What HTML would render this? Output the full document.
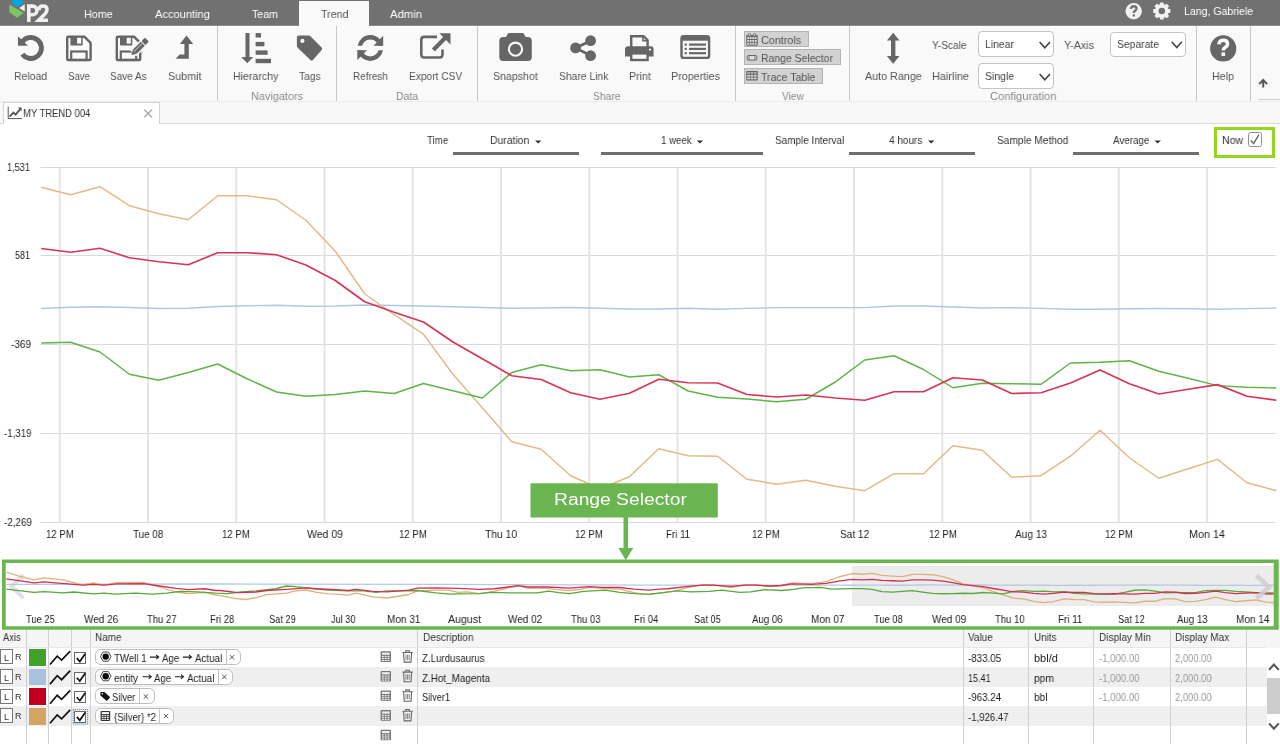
<!DOCTYPE html>
<html lang="en"><head><meta charset="utf-8"><title>P2 Explorer - Trend</title><style>
html,body{margin:0;padding:0;}
body{width:1280px;height:744px;overflow:hidden;position:relative;background:#fff;font-family:"Liberation Sans", sans-serif;}
.t{will-change:transform;}
div,span,svg{position:absolute;box-sizing:border-box;}
.t{white-space:nowrap;display:block;transform-origin:0 0;}
svg{overflow:visible;}
.g{left:0;top:0;width:1280px;height:0;}
.sep{width:1px;background:#c8c8c8;top:26px;height:75px;}
.vbtn{background:#d2d2d2;border:1px solid #b4b4b4;}
.sel{background:#fff;border:1px solid #c4c4c4;border-radius:4px;}
.ul{height:3px;background:#6e6e6e;top:152px;}
.cs{width:1px;background:#d0d0d0;top:630px;height:114px;}
.chip{background:#fff;border:1px solid #bdbdbd;border-radius:5.5px;height:16px;}
.chipsep{width:1px;background:#c6c6c6;height:14px;}
.lbox{background:#fff;border:1px solid #777;width:12.6px;height:15px;left:0px;}

.cb{background:#fff;border:1px solid #6a6a6a;width:12px;height:12px;left:74.4px;}
</style></head><body><div class="g"><div style="left:0px;top:0px;width:1280px;height:25px;background:#717171;"></div><div style="left:0px;top:25px;width:1280px;height:1px;background:#8c8c8c;"></div><div style="left:0px;top:26px;width:1280px;height:1px;background:#fdfdfd;"></div><div style="left:299px;top:1px;width:70px;height:26px;background:#f9f9f9;"></div><svg width="64" height="26" viewBox="0 0 64 26" style="left:0;top:0"><path d="M10.75,2.25L14.5,0H20.5L24.25,2.25L17.25,7.25Z" fill="#00a7e1"/><path d="M9.25,4.5L23.75,12.75L17.25,17.75L9.5,12.5Z" fill="#7cc465"/><path d="M24.75,4.25L19.25,8L24.75,11.5Z" fill="#f0f0f0"/><path d="M28.8,22V6.1H32.6a4.3,4.3 0 0 1 0,8.6H28.8" fill="none" stroke="#f0f0f0" stroke-width="3.6"/><path d="M38.9,10.2Q38.9,6 43,6Q47,6 47,9.6Q47,12.4 43.4,15.6L38.6,20.2H48" fill="none" stroke="#f0f0f0" stroke-width="3.5"/></svg><span class="t" style="left:83.50px;top:9.27px;font-size:11.5px;line-height:11.5px;color:#fff;transform:scaleX(0.9369);">Home</span><span class="t" style="left:154.50px;top:9.27px;font-size:11.5px;line-height:11.5px;color:#fff;transform:scaleX(0.9647);">Accounting</span><span class="t" style="left:252.25px;top:9.27px;font-size:11.5px;line-height:11.5px;color:#fff;transform:scaleX(0.9191);">Team</span><span class="t" style="left:320.60px;top:9.27px;font-size:11.5px;line-height:11.5px;color:#555;transform:scaleX(0.9283);">Trend</span><span class="t" style="left:390.25px;top:9.27px;font-size:11.5px;line-height:11.5px;color:#fff;transform:scaleX(0.9813);">Admin</span><span class="t" style="left:1184.00px;top:6.27px;font-size:11.5px;line-height:11.5px;color:#fff;transform:scaleX(0.9171);">Lang, Gabriele</span><svg width="1280" height="26" viewBox="0 0 1280 26" style="left:0;top:0"><circle cx="1133.7" cy="11.3" r="8.2" fill="#f2f2f2"/><path d="M1130.9,8.9Q1131.1,6.2 1133.8,6.2Q1136.5,6.2 1136.5,8.6Q1136.5,9.9 1135.1,10.8Q1133.8,11.6 1133.8,13" fill="none" stroke="#717171" stroke-width="2.4"/><rect x="1132.7" y="14.3" width="2.2" height="2.2" fill="#717171"/><rect x="1159.8999999999999" y="2.4000000000000004" width="3.8" height="4.2" rx="0.6" fill="#f2f2f2" transform="rotate(0 1161.8 11)"/><rect x="1159.8999999999999" y="2.4000000000000004" width="3.8" height="4.2" rx="0.6" fill="#f2f2f2" transform="rotate(45 1161.8 11)"/><rect x="1159.8999999999999" y="2.4000000000000004" width="3.8" height="4.2" rx="0.6" fill="#f2f2f2" transform="rotate(90 1161.8 11)"/><rect x="1159.8999999999999" y="2.4000000000000004" width="3.8" height="4.2" rx="0.6" fill="#f2f2f2" transform="rotate(135 1161.8 11)"/><rect x="1159.8999999999999" y="2.4000000000000004" width="3.8" height="4.2" rx="0.6" fill="#f2f2f2" transform="rotate(180 1161.8 11)"/><rect x="1159.8999999999999" y="2.4000000000000004" width="3.8" height="4.2" rx="0.6" fill="#f2f2f2" transform="rotate(225 1161.8 11)"/><rect x="1159.8999999999999" y="2.4000000000000004" width="3.8" height="4.2" rx="0.6" fill="#f2f2f2" transform="rotate(270 1161.8 11)"/><rect x="1159.8999999999999" y="2.4000000000000004" width="3.8" height="4.2" rx="0.6" fill="#f2f2f2" transform="rotate(315 1161.8 11)"/><circle cx="1161.8" cy="11" r="5.1" fill="none" stroke="#f2f2f2" stroke-width="3.6"/></svg></div><div class="g"><div style="left:0px;top:27px;width:1280px;height:74.2px;background:#f9f9f9;"></div><div style="left:299px;top:25px;width:70px;height:3px;background:#f9f9f9;"></div><div style="left:0px;top:101px;width:1280px;height:1px;background:#ececec;"></div><div class="sep" style="left:217px"></div><div class="sep" style="left:336px"></div><div class="sep" style="left:477px"></div><div class="sep" style="left:735px"></div><div class="sep" style="left:849px"></div><div class="sep" style="left:1196px"></div><div class="sep" style="left:1250px"></div><div style="left:1258px;top:99px;width:22px;height:1px;background:#d0d0d0;"></div><div class="vbtn" style="left:744px;top:31.3px;width:64.8px;height:15.4px;"></div><div class="vbtn" style="left:744px;top:49.3px;width:97px;height:15.6px;"></div><div class="vbtn" style="left:744px;top:68px;width:78.8px;height:15.8px;"></div><div class="sel" style="left:978px;top:31.3px;width:75.5px;height:25.8px;"></div><div class="sel" style="left:978px;top:63.3px;width:75.5px;height:25.6px;"></div><div class="sel" style="left:1110.3px;top:31.5px;width:75.4px;height:25.2px;"></div><svg width="1280" height="124" viewBox="0 0 1280 124" style="left:0;top:0"><path d="M21.81,42.76A10.52,10.52 0 1 1 22.41,54.20" fill="none" stroke="#666" stroke-width="4.84"/><path d="M17.98,36.3V45.72H27.9Z" fill="#666"/><g transform="translate(66,35.6)"><path d="M1.2,2.2Q1.2,1.2 2.2,1.2H18.6L24.6,7.2V23.4Q24.6,24.4 23.6,24.4H2.2Q1.2,24.4 1.2,23.4Z" fill="none" stroke="#666" stroke-width="2.4" stroke-linejoin="round"/><path d="M4.4,1.2H16.7V9Q16.7,10 15.7,10H5.4Q4.4,10 4.4,9Z" fill="#666"/><rect x="11.1" y="2.2" width="4.1" height="5.8" fill="#f9f9f9"/><rect x="5.2" y="15.9" width="15.4" height="8.5" fill="none" stroke="#666" stroke-width="2.2"/></g><g transform="translate(115.6,35.6)"><path d="M1.2,2.2Q1.2,1.2 2.2,1.2H18.6L24.6,7.2V23.4Q24.6,24.4 23.6,24.4H2.2Q1.2,24.4 1.2,23.4Z" fill="none" stroke="#666" stroke-width="2.4" stroke-linejoin="round"/><path d="M4.4,1.2H16.7V9Q16.7,10 15.7,10H5.4Q4.4,10 4.4,9Z" fill="#666"/><rect x="11.1" y="2.2" width="4.1" height="5.8" fill="#f9f9f9"/><rect x="5.2" y="15.9" width="15.4" height="8.5" fill="none" stroke="#666" stroke-width="2.2"/></g><g transform="translate(139.25,47.3) rotate(-45)"><rect x="-8.6" y="-4.3" width="20.4" height="8.6" fill="#f9f9f9"/><rect x="-6.4" y="-2.8" width="11.4" height="5.6" fill="#666"/><rect x="5.9" y="-2.8" width="4.9" height="5.6" rx="0.9" fill="#666"/><path d="M-6.4,-2.8L-11,0L-6.4,2.8Z" fill="#666"/><path d="M-6.4,-0.7H5" stroke="#f9f9f9" stroke-width="0.7"/></g><path d="M186.5,35.6L193.2,43.9H188.8V58.8H175.6L179.6,54.4H184.4V43.9H179.9Z" fill="#666"/><path d="M245.5,33.1H249.5V56.9H253.2L247.3,63.2L241.2,56.9H245.5Z" fill="#666"/><rect x="255.6" y="33.1" width="5.4" height="4.4" fill="#666"/><rect x="255.6" y="41.9" width="8.8" height="4.4" fill="#666"/><rect x="255.6" y="50.4" width="12.0" height="4.4" fill="#666"/><rect x="255.6" y="58.8" width="15.4" height="4.4" fill="#666"/><path d="M298.9,35.5H308.6Q309.8,35.5 310.7,36.4L321.6,47.4Q322.9,48.7 321.6,50L312.9,59.9Q311.7,61.2 310.4,59.9L297.9,47.9Q296.9,46.9 296.9,45.7V37.5Q296.9,35.5 298.9,35.5Z" fill="#666"/><circle cx="302.4" cy="40.9" r="2.1" fill="#f9f9f9"/><clipPath id="rfu"><rect x="350" y="30" width="40" height="15.7"/></clipPath><clipPath id="rfl"><rect x="350" y="50.3" width="40" height="15"/></clipPath><circle cx="370.3" cy="48.0" r="10.7" fill="none" stroke="#666" stroke-width="4.4" clip-path="url(#rfu)"/><path d="M383.2,35.8V45.7H373.5Z" fill="#666"/><circle cx="370.3" cy="48.0" r="10.7" fill="none" stroke="#666" stroke-width="4.4" clip-path="url(#rfl)"/><path d="M357.3,60V50.3H367Z" fill="#666"/><path d="M437,36.9H424.2Q421.3,36.9 421.3,39.8V54.6Q421.3,57.5 424.2,57.5H439.6Q442.5,57.5 442.5,54.6V49.6" fill="none" stroke="#666" stroke-width="2.6"/><path d="M433.3,49.9L445.6,37.6" stroke="#666" stroke-width="4.2"/><path d="M439.4,33.3H450.5V44.4Z" fill="#666"/><rect x="499.3" y="37" width="32.5" height="24" rx="4" fill="#666"/><path d="M505.4,38.5L507.3,34.4Q507.9,33.1 509.4,33.1H522.2Q523.7,33.1 524.3,34.4L526.2,38.5Z" fill="#666"/><circle cx="515.5" cy="49.2" r="6.6" fill="none" stroke="#f9f9f9" stroke-width="2.1"/><path d="M590.6,40.9L575.4,47.9L590.6,55.6" fill="none" stroke="#666" stroke-width="2.8"/><circle cx="575.6" cy="47.9" r="5.4" fill="#666"/><circle cx="590.6" cy="40.7" r="5.4" fill="#666"/><circle cx="590.6" cy="55.7" r="5.4" fill="#666"/><path d="M631.2,47V36.2H643.6L647.6,40.2V47" fill="none" stroke="#666" stroke-width="2.4"/><path d="M643,36V40.8H648" fill="none" stroke="#666" stroke-width="1.6"/><path d="M628,46.2H650.6Q653.6,46.2 653.6,49.2V56.4H625V49.2Q625,46.2 628,46.2Z" fill="#666"/><rect x="631.2" y="53.4" width="16.4" height="6.6" fill="#f9f9f9" stroke="#666" stroke-width="2.4"/><circle cx="650" cy="49.6" r="1.1" fill="#f9f9f9"/><rect x="681.5" y="36.3" width="27.6" height="21.6" rx="2.2" fill="none" stroke="#666" stroke-width="2.4"/><rect x="681.5" y="36.3" width="27.6" height="4.4" fill="#666"/><rect x="684.6" y="43.5" width="2.2" height="2.2" fill="#666"/><rect x="689" y="43.5" width="17" height="2.2" fill="#666"/><rect x="684.6" y="47.8" width="2.2" height="2.2" fill="#666"/><rect x="689" y="47.8" width="17" height="2.2" fill="#666"/><rect x="684.6" y="52.1" width="2.2" height="2.2" fill="#666"/><rect x="689" y="52.1" width="17" height="2.2" fill="#666"/><path d="M893.2,32.8L899.5,40.6H895.4V56H899.5L893.2,63.8L886.9,56H891V40.6H886.9Z" fill="#666"/><circle cx="1223.2" cy="48.4" r="13.1" fill="#666"/><path d="M1218.9,44.4Q1219.2,40.3 1223.3,40.3Q1227.5,40.3 1227.5,43.9Q1227.5,45.9 1225.3,47.2Q1223.3,48.4 1223.3,50.4" fill="none" stroke="#f9f9f9" stroke-width="3.5"/><rect x="1221.5" y="52.4" width="3.6" height="3.6" fill="#f9f9f9"/><path d="M1263.2,78.8L1267.6,83.4L1266.5,84.5L1264,82V87.2H1262.4V82L1259.9,84.5L1258.8,83.4Z" fill="#555" stroke="#555" stroke-width="0.5"/><g transform="translate(746.3,33.2)"><rect x="0" y="1.7" width="11.4" height="10.8" rx="0.6" fill="#666"/><rect x="0.95" y="3.90" width="1.9" height="1.9" fill="#dcdcdc"/><rect x="3.45" y="3.90" width="1.9" height="1.9" fill="#dcdcdc"/><rect x="5.95" y="3.90" width="1.9" height="1.9" fill="#dcdcdc"/><rect x="8.45" y="3.90" width="1.9" height="1.9" fill="#dcdcdc"/><rect x="0.95" y="6.75" width="1.9" height="1.9" fill="#dcdcdc"/><rect x="3.45" y="6.75" width="1.9" height="1.9" fill="#dcdcdc"/><rect x="5.95" y="6.75" width="1.9" height="1.9" fill="#dcdcdc"/><rect x="8.45" y="6.75" width="1.9" height="1.9" fill="#dcdcdc"/><rect x="0.95" y="9.60" width="1.9" height="1.9" fill="#dcdcdc"/><rect x="3.45" y="9.60" width="1.9" height="1.9" fill="#dcdcdc"/><rect x="5.95" y="9.60" width="1.9" height="1.9" fill="#dcdcdc"/><rect x="8.45" y="9.60" width="1.9" height="1.9" fill="#dcdcdc"/><rect x="2.1" y="0.4" width="2.2" height="2.8" rx="1" fill="#d2d2d2" stroke="#666" stroke-width="0.9"/><rect x="7.1" y="0.4" width="2.2" height="2.8" rx="1" fill="#d2d2d2" stroke="#666" stroke-width="0.9"/></g><g transform="translate(746.7,55)"><rect x="0.5" y="0.5" width="9.6" height="4.6" rx="1.2" fill="#ddd" stroke="#666" stroke-width="1"/><path d="M2.4,0.5V5.1M8.2,0.5V5.1" stroke="#666" stroke-width="0.8"/></g><g transform="translate(746.3,71)"><rect x="0" y="0" width="11.4" height="9.6" rx="0.6" fill="#666"/><rect x="0.95" y="1.20" width="2.7" height="1.5" fill="#bdbdbd"/><rect x="4.25" y="1.20" width="2.7" height="1.5" fill="#bdbdbd"/><rect x="7.55" y="1.20" width="2.7" height="1.5" fill="#bdbdbd"/><rect x="0.95" y="3.90" width="2.7" height="1.7" fill="#dcdcdc"/><rect x="4.25" y="3.90" width="2.7" height="1.7" fill="#dcdcdc"/><rect x="7.55" y="3.90" width="2.7" height="1.7" fill="#dcdcdc"/><rect x="0.95" y="6.60" width="2.7" height="1.7" fill="#dcdcdc"/><rect x="4.25" y="6.60" width="2.7" height="1.7" fill="#dcdcdc"/><rect x="7.55" y="6.60" width="2.7" height="1.7" fill="#dcdcdc"/></g><path d="M1039.6,42L1044.8,47.8L1050.0,42" fill="none" stroke="#444" stroke-width="1.6"/><path d="M1039.6,74L1044.8,79.8L1050.0,74" fill="none" stroke="#444" stroke-width="1.6"/><path d="M1171.8,41.8L1176.8,47.599999999999994L1181.8,41.8" fill="none" stroke="#444" stroke-width="1.6"/></svg><span class="t" style="left:14.40px;top:70.67px;font-size:11.5px;line-height:11.5px;color:#555;transform:scaleX(0.9080);">Reload</span><span class="t" style="left:67.90px;top:70.67px;font-size:11.5px;line-height:11.5px;color:#555;transform:scaleX(0.8334);">Save</span><span class="t" style="left:110.25px;top:70.67px;font-size:11.5px;line-height:11.5px;color:#555;transform:scaleX(0.8684);">Save As</span><span class="t" style="left:167.75px;top:70.67px;font-size:11.5px;line-height:11.5px;color:#555;transform:scaleX(0.9358);">Submit</span><span class="t" style="left:233.10px;top:70.67px;font-size:11.5px;line-height:11.5px;color:#555;transform:scaleX(0.9224);">Hierarchy</span><span class="t" style="left:299.40px;top:70.67px;font-size:11.5px;line-height:11.5px;color:#555;transform:scaleX(0.8890);">Tags</span><span class="t" style="left:352.90px;top:70.67px;font-size:11.5px;line-height:11.5px;color:#555;transform:scaleX(0.8652);">Refresh</span><span class="t" style="left:408.75px;top:70.67px;font-size:11.5px;line-height:11.5px;color:#555;transform:scaleX(0.8847);">Export CSV</span><span class="t" style="left:493.10px;top:70.67px;font-size:11.5px;line-height:11.5px;color:#555;transform:scaleX(0.9216);">Snapshot</span><span class="t" style="left:558.75px;top:70.67px;font-size:11.5px;line-height:11.5px;color:#555;transform:scaleX(0.8975);">Share Link</span><span class="t" style="left:628.75px;top:70.67px;font-size:11.5px;line-height:11.5px;color:#555;transform:scaleX(0.9236);">Print</span><span class="t" style="left:670.90px;top:70.67px;font-size:11.5px;line-height:11.5px;color:#555;transform:scaleX(0.9328);">Properties</span><span class="t" style="left:864.80px;top:70.67px;font-size:11.5px;line-height:11.5px;color:#555;transform:scaleX(0.9350);">Auto Range</span><span class="t" style="left:1212.00px;top:70.67px;font-size:11.5px;line-height:11.5px;color:#555;transform:scaleX(0.9300);">Help</span><span class="t" style="left:251.00px;top:90.77px;font-size:11.5px;line-height:11.5px;color:#8a8a8a;transform:scaleX(0.9460);">Navigators</span><span class="t" style="left:396.00px;top:90.77px;font-size:11.5px;line-height:11.5px;color:#8a8a8a;transform:scaleX(0.9055);">Data</span><span class="t" style="left:592.50px;top:90.77px;font-size:11.5px;line-height:11.5px;color:#8a8a8a;transform:scaleX(0.8961);">Share</span><span class="t" style="left:781.60px;top:90.77px;font-size:11.5px;line-height:11.5px;color:#8a8a8a;transform:scaleX(0.8819);">View</span><span class="t" style="left:989.50px;top:90.77px;font-size:11.5px;line-height:11.5px;color:#8a8a8a;transform:scaleX(0.9721);">Configuration</span><span class="t" style="left:760.70px;top:34.97px;font-size:11.5px;line-height:11.5px;color:#555;transform:scaleX(0.9386);">Controls</span><span class="t" style="left:761.00px;top:52.87px;font-size:11.5px;line-height:11.5px;color:#555;transform:scaleX(0.9069);">Range Selector</span><span class="t" style="left:761.00px;top:71.67px;font-size:11.5px;line-height:11.5px;color:#555;transform:scaleX(0.9150);">Trace Table</span><span class="t" style="left:932.30px;top:40.07px;font-size:11.5px;line-height:11.5px;color:#555;transform:scaleX(0.8822);">Y-Scale</span><span class="t" style="left:932.00px;top:71.37px;font-size:11.5px;line-height:11.5px;color:#555;transform:scaleX(0.9487);">Hairline</span><span class="t" style="left:984.80px;top:39.27px;font-size:11.5px;line-height:11.5px;color:#444;transform:scaleX(0.9056);">Linear</span><span class="t" style="left:984.80px;top:71.37px;font-size:11.5px;line-height:11.5px;color:#444;transform:scaleX(0.9134);">Single</span><span class="t" style="left:1063.80px;top:39.57px;font-size:11.5px;line-height:11.5px;color:#555;transform:scaleX(0.9325);">Y-Axis</span><span class="t" style="left:1116.90px;top:38.97px;font-size:11.5px;line-height:11.5px;color:#444;transform:scaleX(0.9017);">Separate</span></div><div class="g"><div style="left:0px;top:102px;width:1280px;height:21.5px;background:#f8f8f8;"></div><div style="left:0px;top:123px;width:1280px;height:1px;background:#dcdcdc;"></div><div style="left:2.5px;top:102px;width:157px;height:22px;background:#fff;border:1px solid #d4d4d4;border-bottom:none;"></div><svg width="170" height="22" viewBox="0 102 170 22" style="left:0;top:102px"><path d="M8.2,106.6V118.6H22" fill="none" stroke="#555" stroke-width="1"/><path d="M9.6,116.6L13.4,112.6L15.6,114.6L20.6,108.6" fill="none" stroke="#555" stroke-width="1.8"/><path d="M18,107.6H21.6V111.2Z" fill="#555"/><path d="M144.3,109.7L152,117.2M152,109.7L144.3,117.2" stroke="#a4a4a4" stroke-width="1.2"/></svg><span class="t" style="left:22.60px;top:107.69px;font-size:11px;line-height:11px;color:#333;transform:scaleX(0.8589);">MY TREND 004</span></div><div class="g"><span class="t" style="left:426.75px;top:135.39px;font-size:11px;line-height:11px;color:#333;transform:scaleX(0.8837);">Time</span><span class="t" style="left:490.00px;top:135.39px;font-size:11px;line-height:11px;color:#333;transform:scaleX(0.9440);">Duration</span><span class="t" style="left:661.25px;top:135.39px;font-size:11px;line-height:11px;color:#333;transform:scaleX(0.8821);">1 week</span><span class="t" style="left:774.50px;top:135.39px;font-size:11px;line-height:11px;color:#333;transform:scaleX(0.9060);">Sample Interval</span><span class="t" style="left:888.75px;top:135.39px;font-size:11px;line-height:11px;color:#333;transform:scaleX(0.9059);">4 hours</span><span class="t" style="left:997.00px;top:135.39px;font-size:11px;line-height:11px;color:#333;transform:scaleX(0.9248);">Sample Method</span><span class="t" style="left:1112.50px;top:135.39px;font-size:11px;line-height:11px;color:#333;transform:scaleX(0.8889);">Average</span><div class="ul" style="left:452.5px;width:126.3px"></div><div class="ul" style="left:601.25px;width:161.8px"></div><div class="ul" style="left:848.75px;width:126.3px"></div><div class="ul" style="left:1073.25px;width:126px"></div><div style="left:1214px;top:127px;width:61.2px;height:31px;border:3px solid #93d51f;background:#fff;"></div><div style="left:1247.6px;top:132.3px;width:14.5px;height:14.5px;border:1.7px solid #909090;border-radius:2.5px;background:#fff;"></div><span class="t" style="left:1221.80px;top:135.39px;font-size:11px;line-height:11px;color:#333;transform:scaleX(0.9630);">Now</span><svg width="1280" height="40" viewBox="0 124 1280 40" style="left:0;top:124px"><path d="M535,140.6H541.4L538.2,143.6Z" fill="#333"/><path d="M696.75,140.6H703.15L699.95,143.6Z" fill="#333"/><path d="M928,140.6H934.4L931.2,143.6Z" fill="#333"/><path d="M1154.5,140.6H1160.9L1157.7,143.6Z" fill="#333"/><path d="M1250.8,140.6L1253.6,143.6L1258.9,134.6" fill="none" stroke="#666" stroke-width="1.4"/></svg></div><div class="g"><svg width="1280" height="396" viewBox="0 163 1280 396" style="left:0;top:163px"><path d="M40.5,167.5H1275.5" stroke="#d9d9d9" stroke-width="1.15"/><path d="M40.5,255.5H1275.5" stroke="#d9d9d9" stroke-width="1.15"/><path d="M40.5,344.5H1275.5" stroke="#d9d9d9" stroke-width="1.15"/><path d="M40.5,433.5H1275.5" stroke="#d9d9d9" stroke-width="1.15"/><path d="M40.5,522.5H1275.5" stroke="#d9d9d9" stroke-width="1.15"/><path d="M59.70,168V522.5" stroke="#e4e4e4" stroke-width="2"/><path d="M147.96,168V522.5" stroke="#e4e4e4" stroke-width="2"/><path d="M236.22,168V522.5" stroke="#e4e4e4" stroke-width="2"/><path d="M324.48,168V522.5" stroke="#e4e4e4" stroke-width="2"/><path d="M412.74,168V522.5" stroke="#e4e4e4" stroke-width="2"/><path d="M501.00,168V522.5" stroke="#e4e4e4" stroke-width="2"/><path d="M589.26,168V522.5" stroke="#e4e4e4" stroke-width="2"/><path d="M677.52,168V522.5" stroke="#e4e4e4" stroke-width="2"/><path d="M765.78,168V522.5" stroke="#e4e4e4" stroke-width="2"/><path d="M854.04,168V522.5" stroke="#e4e4e4" stroke-width="2"/><path d="M942.30,168V522.5" stroke="#e4e4e4" stroke-width="2"/><path d="M1030.56,168V522.5" stroke="#e4e4e4" stroke-width="2"/><path d="M1118.82,168V522.5" stroke="#e4e4e4" stroke-width="2"/><path d="M1207.08,168V522.5" stroke="#e4e4e4" stroke-width="2"/><polyline points="41.2,308.50 70.6,307.25 100.0,306.75 129.4,307.50 158.8,308.50 188.2,308.25 217.7,306.50 247.1,305.75 276.5,305.25 305.9,306.25 335.3,306.00 364.7,305.00 394.1,305.50 423.5,306.00 452.9,306.75 482.3,307.50 511.8,308.25 541.2,308.00 570.6,307.50 600.0,308.25 629.4,309.00 658.8,309.00 688.2,308.20 717.6,309.20 747.0,308.40 776.5,307.60 805.9,307.60 835.3,307.60 864.7,307.60 894.1,306.00 923.5,306.00 952.9,307.00 982.3,308.00 1011.7,307.60 1041.1,308.40 1070.5,309.20 1100.0,309.20 1129.4,308.70 1158.8,308.50 1188.2,308.70 1217.6,309.20 1247.0,308.60 1276.4,308.00" fill="none" stroke="#aec7e5" stroke-width="1.4" stroke-linejoin="round"/><polyline points="41.2,187.22 70.6,194.72 100.0,186.72 129.4,205.72 158.8,213.72 188.2,219.72 217.7,195.72 247.1,195.72 276.5,199.72 305.9,220.22 335.3,251.22 364.7,293.72 394.1,314.72 423.5,334.22 452.9,374.22 482.3,407.72 511.8,441.72 541.2,449.22 570.6,475.72 600.0,488.72 629.4,476.72 658.8,448.72 688.2,455.72 717.6,456.22 747.0,479.22 776.5,484.22 805.9,480.22 835.3,486.22 864.7,490.72 894.1,473.72 923.5,473.72 952.9,445.72 982.3,450.22 1011.7,477.22 1041.1,475.72 1070.5,456.22 1100.0,430.22 1129.4,457.72 1158.8,478.22 1188.2,468.72 1217.6,459.42 1247.0,482.72 1276.4,490.72" fill="none" stroke="#e4b986" stroke-width="1.45" stroke-linejoin="round"/><polyline points="41.2,343.00 70.6,342.25 100.0,352.00 129.4,374.25 158.8,380.25 188.2,372.50 217.7,364.00 247.1,378.75 276.5,392.00 305.9,396.25 335.3,394.50 364.7,391.00 394.1,393.50 423.5,383.50 452.9,390.75 482.3,398.00 511.8,372.50 541.2,364.75 570.6,370.75 600.0,369.75 629.4,377.00 658.8,374.75 688.2,391.00 717.6,397.25 747.0,399.00 776.5,401.75 805.9,399.25 835.3,382.00 864.7,360.00 894.1,355.75 923.5,369.50 952.9,387.75 982.3,383.25 1011.7,383.75 1041.1,384.25 1070.5,363.00 1100.0,362.25 1129.4,360.75 1158.8,371.25 1188.2,378.25 1217.6,385.60 1247.0,387.25 1276.4,388.00" fill="none" stroke="#60b348" stroke-width="1.45" stroke-linejoin="round"/><polyline points="41.2,248.50 70.6,252.25 100.0,248.25 129.4,257.75 158.8,261.75 188.2,264.75 217.7,252.75 247.1,252.75 276.5,254.75 305.9,265.00 335.3,280.50 364.7,301.75 394.1,312.25 423.5,322.00 452.9,342.00 482.3,358.75 511.8,375.75 541.2,379.50 570.6,392.75 600.0,399.25 629.4,393.25 658.8,379.25 688.2,382.75 717.6,383.00 747.0,394.50 776.5,397.00 805.9,395.00 835.3,398.00 864.7,400.25 894.1,391.75 923.5,391.75 952.9,377.75 982.3,380.00 1011.7,393.50 1041.1,392.75 1070.5,383.00 1100.0,370.00 1129.4,383.75 1158.8,394.00 1188.2,389.25 1217.6,384.60 1247.0,396.25 1276.4,400.25" fill="none" stroke="#d63656" stroke-width="1.7" stroke-linejoin="round"/><rect x="530.5" y="483.3" width="187.3" height="34.2" fill="#6ab550"/><path d="M623.5,517H628.1V548H633.2L625.8,560.3L618.4,548H623.5Z" fill="#6ab550"/></svg><span class="t" style="left:7.00px;top:161.99px;font-size:11px;line-height:11px;color:#222;transform:scaleX(0.8281);">1,531</span><span class="t" style="left:15.30px;top:249.79px;font-size:11px;line-height:11px;color:#222;transform:scaleX(0.8225);">581</span><span class="t" style="left:11.25px;top:338.89px;font-size:11px;line-height:11px;color:#222;transform:scaleX(0.9078);">-369</span><span class="t" style="left:3.75px;top:427.89px;font-size:11px;line-height:11px;color:#222;transform:scaleX(0.8813);">-1,319</span><span class="t" style="left:3.60px;top:516.79px;font-size:11px;line-height:11px;color:#222;transform:scaleX(0.8941);">-2,269</span><div style="left:0px;top:158px;width:38px;height:5.4px;background:#fff;"></div><span class="t" style="left:45.90px;top:528.69px;font-size:11px;line-height:11px;color:#222;transform:scaleX(0.8743);">12 PM</span><span class="t" style="left:132.91px;top:528.69px;font-size:11px;line-height:11px;color:#222;transform:scaleX(0.8953);">Tue 08</span><span class="t" style="left:222.42px;top:528.69px;font-size:11px;line-height:11px;color:#222;transform:scaleX(0.8743);">12 PM</span><span class="t" style="left:306.58px;top:528.69px;font-size:11px;line-height:11px;color:#222;transform:scaleX(0.9544);">Wed 09</span><span class="t" style="left:398.94px;top:528.69px;font-size:11px;line-height:11px;color:#222;transform:scaleX(0.8743);">12 PM</span><span class="t" style="left:485.10px;top:528.69px;font-size:11px;line-height:11px;color:#222;transform:scaleX(0.9343);">Thu 10</span><span class="t" style="left:575.46px;top:528.69px;font-size:11px;line-height:11px;color:#222;transform:scaleX(0.8743);">12 PM</span><span class="t" style="left:665.62px;top:528.69px;font-size:11px;line-height:11px;color:#222;transform:scaleX(0.8787);">Fri 11</span><span class="t" style="left:751.98px;top:528.69px;font-size:11px;line-height:11px;color:#222;transform:scaleX(0.8743);">12 PM</span><span class="t" style="left:839.54px;top:528.69px;font-size:11px;line-height:11px;color:#222;transform:scaleX(0.9179);">Sat 12</span><span class="t" style="left:928.50px;top:528.69px;font-size:11px;line-height:11px;color:#222;transform:scaleX(0.8743);">12 PM</span><span class="t" style="left:1014.66px;top:528.69px;font-size:11px;line-height:11px;color:#222;transform:scaleX(0.9176);">Aug 13</span><span class="t" style="left:1105.02px;top:528.69px;font-size:11px;line-height:11px;color:#222;transform:scaleX(0.8743);">12 PM</span><span class="t" style="left:1189.18px;top:528.69px;font-size:11px;line-height:11px;color:#222;transform:scaleX(0.9808);">Mon 14</span><span class="t" style="left:553.60px;top:490.56px;font-size:17.3px;line-height:17.3px;color:#fff;transform:scaleX(1.1148);">Range Selector</span></div><div class="g"><div style="left:851.8px;top:566px;width:424px;height:40px;background:#ececec;"></div><svg width="1280" height="72" viewBox="0 559 1280 72" style="left:0;top:559px"><clipPath id="rsc"><rect x="5.6" y="563" width="1268.2" height="63"/></clipPath><path d="M23.5,575L11.5,586.5L23.5,598" fill="none" stroke="#e2e2e2" stroke-width="4.4"/><g clip-path="url(#rsc)"><polyline points="6.3,584.40 220.0,584.00 440.0,584.30 650.0,585.20 840.0,585.20 851.8,585.26 861.9,585.14 872.0,585.09 882.1,585.17 892.2,585.26 902.3,585.24 912.4,585.07 922.5,585.00 932.6,584.95 942.7,585.04 952.8,585.02 962.9,584.92 973.0,584.97 983.1,585.02 993.2,585.09 1003.3,585.17 1013.4,585.24 1023.5,585.21 1033.6,585.17 1043.7,585.24 1053.8,585.31 1063.9,585.31 1074.0,585.23 1084.1,585.33 1094.2,585.25 1104.3,585.18 1114.4,585.18 1124.5,585.18 1134.6,585.18 1144.8,585.02 1154.9,585.02 1165.0,585.12 1175.1,585.21 1185.2,585.18 1195.3,585.25 1205.4,585.33 1215.5,585.33 1225.6,585.28 1235.7,585.26 1245.8,585.28 1255.9,585.33 1266.0,585.27 1276.1,585.21" fill="none" stroke="#b4cae4" stroke-width="1.3" stroke-linejoin="round"/><polyline points="6.3,572.00 18.0,575.80 34.0,579.80 44.0,577.80 63.0,579.80 82.7,584.80 93.4,583.00 104.0,585.20 116.8,582.60 143.8,582.50 156.0,586.00 176.0,592.00 188.7,593.60 204.9,592.30 215.6,595.00 220.0,595.60 234.4,598.30 246.0,599.50 256.0,597.70 266.7,594.70 286.5,593.20 295.5,590.90 306.3,590.00 317.0,592.30 327.8,593.80 336.8,594.10 347.6,595.20 356.6,593.20 372.7,596.80 387.0,598.00 399.7,596.00 408.7,594.50 417.7,590.90 435.6,590.20 449.0,590.20 458.0,592.30 467.0,591.80 479.5,593.60 494.0,591.40 508.3,587.80 518.2,585.70 528.0,588.40 547.8,588.40 556.8,589.60 569.4,590.50 580.2,589.30 589.1,587.30 601.7,588.40 619.7,589.10 634.0,592.70 649.3,594.70 660.8,592.90 673.4,591.40 686.0,587.80 702.0,584.80 712.9,584.80 730.9,587.50 745.2,584.80 756.0,584.80 770.4,586.60 781.2,585.50 792.0,582.80 811.7,583.70 826.0,581.60 838.7,577.00 851.8,573.52 861.9,574.25 872.0,573.47 882.1,575.31 892.2,576.09 902.3,576.67 912.4,574.35 922.5,574.35 932.6,574.73 942.7,576.72 952.8,579.72 962.9,583.83 973.0,585.86 983.1,587.75 993.2,591.62 1003.3,594.87 1013.4,598.16 1023.5,598.88 1033.6,601.45 1043.7,602.71 1053.8,601.55 1063.9,598.84 1074.0,599.51 1084.1,599.56 1094.2,601.79 1104.3,602.27 1114.4,601.89 1124.5,602.47 1134.6,602.90 1144.8,601.26 1154.9,601.26 1165.0,598.55 1175.1,598.98 1185.2,601.59 1195.3,601.45 1205.4,599.56 1215.5,597.05 1225.6,599.71 1235.7,601.69 1245.8,600.77 1255.9,599.87 1266.0,602.13 1276.1,602.90" fill="none" stroke="#deb07a" stroke-width="1.3" stroke-linejoin="round"/><polyline points="6.3,589.10 34.0,592.30 44.0,591.60 63.0,592.90 73.7,592.00 93.4,593.80 104.0,593.20 115.0,594.10 134.8,593.20 152.7,594.10 167.0,593.20 179.7,591.40 197.7,591.80 215.6,593.20 227.0,593.60 241.5,592.00 256.0,590.90 275.7,588.75 286.5,586.00 295.5,586.60 306.3,587.80 317.0,589.10 327.8,590.20 347.6,590.90 363.8,590.90 376.0,592.30 387.0,590.90 408.7,590.90 417.7,590.50 435.6,592.90 450.0,594.10 458.0,593.80 479.5,593.60 490.3,592.30 511.9,592.90 537.0,592.90 548.7,591.10 558.6,592.70 569.4,593.60 583.8,591.40 605.3,590.20 619.7,592.30 637.7,593.80 649.3,594.10 660.8,592.90 677.0,590.90 691.3,591.80 709.3,591.40 721.9,590.20 739.8,592.30 750.6,591.80 765.0,589.60 781.2,590.50 793.8,589.30 802.7,587.80 820.7,587.30 831.5,589.10 851.8,588.60 861.9,588.53 872.0,589.47 882.1,591.63 892.2,592.21 902.3,591.46 912.4,590.64 922.5,592.06 932.6,593.35 942.7,593.76 952.8,593.59 962.9,593.25 973.0,593.49 983.1,592.52 993.2,593.22 1003.3,593.93 1013.4,591.46 1023.5,590.71 1033.6,591.29 1043.7,591.19 1053.8,591.89 1063.9,591.68 1074.0,593.25 1084.1,593.85 1094.2,594.02 1104.3,594.29 1114.4,594.05 1124.5,592.38 1134.6,590.25 1144.8,589.84 1154.9,591.17 1165.0,592.93 1175.1,592.50 1185.2,592.55 1195.3,592.60 1205.4,590.54 1215.5,590.47 1225.6,590.32 1235.7,591.34 1245.8,592.01 1255.9,592.73 1266.0,592.89 1276.1,592.96" fill="none" stroke="#55aa3c" stroke-width="1.3" stroke-linejoin="round"/><polyline points="6.3,578.90 34.0,582.80 44.0,581.90 82.7,585.20 93.4,584.30 104.0,585.20 116.8,583.90 143.8,583.70 156.0,585.50 176.0,588.40 188.7,589.60 204.9,588.75 215.6,590.50 220.0,590.50 238.0,592.70 256.0,592.00 266.7,590.50 286.5,589.30 306.3,587.80 317.0,588.75 336.8,589.60 347.6,590.50 356.6,589.30 372.7,591.40 387.0,591.80 399.7,590.90 408.7,590.20 417.7,588.20 435.6,587.80 458.0,588.40 479.5,589.30 494.0,588.75 508.3,587.00 518.2,585.70 528.0,587.00 547.8,587.00 569.4,588.20 589.1,586.60 601.7,587.30 619.7,587.50 634.0,589.10 649.3,590.20 659.2,589.10 668.0,588.75 686.0,586.60 702.0,585.20 712.9,585.20 730.9,586.40 745.2,585.20 756.0,585.20 770.4,586.00 781.2,585.50 792.0,583.90 811.7,584.30 826.0,583.40 838.7,581.20 851.8,579.45 861.9,579.82 872.0,579.43 882.1,580.35 892.2,580.74 902.3,581.03 912.4,579.87 922.5,579.87 932.6,580.06 942.7,581.05 952.8,582.55 962.9,584.61 973.0,585.63 983.1,586.57 993.2,588.51 1003.3,590.13 1013.4,591.77 1023.5,592.14 1033.6,593.42 1043.7,594.05 1053.8,593.47 1063.9,592.11 1074.0,592.45 1084.1,592.47 1094.2,593.59 1104.3,593.83 1114.4,593.64 1124.5,593.93 1134.6,594.14 1144.8,593.32 1154.9,593.32 1165.0,591.97 1175.1,592.18 1185.2,593.49 1195.3,593.42 1205.4,592.47 1215.5,591.22 1225.6,592.55 1235.7,593.54 1245.8,593.08 1255.9,592.63 1266.0,593.76 1276.1,594.14" fill="none" stroke="#d23052" stroke-width="1.3" stroke-linejoin="round"/></g><path fill-rule="evenodd" d="M2,559.5H1278.7V629.8H2ZM5.7,563V626.3H1273.7V563Z" fill="#6ab550"/><path d="M1256.5,575.5L1269,587L1256.5,598.5" fill="none" stroke="#cfcfcf" stroke-width="4.6" opacity="0.85"/></svg><span class="t" style="left:26.02px;top:613.59px;font-size:11px;line-height:11px;color:#222;transform:scaleX(0.8495);">Tue 25</span><span class="t" style="left:83.87px;top:613.59px;font-size:11px;line-height:11px;color:#222;transform:scaleX(0.9080);">Wed 26</span><span class="t" style="left:146.85px;top:613.59px;font-size:11px;line-height:11px;color:#222;transform:scaleX(0.8613);">Thu 27</span><span class="t" style="left:210.07px;top:613.59px;font-size:11px;line-height:11px;color:#222;transform:scaleX(0.8622);">Fri 28</span><span class="t" style="left:269.42px;top:613.59px;font-size:11px;line-height:11px;color:#222;transform:scaleX(0.8409);">Sat 29</span><span class="t" style="left:331.15px;top:613.59px;font-size:11px;line-height:11px;color:#222;transform:scaleX(0.8345);">Jul 30</span><span class="t" style="left:387.25px;top:613.59px;font-size:11px;line-height:11px;color:#222;transform:scaleX(0.9127);">Mon 31</span><span class="t" style="left:448.10px;top:613.59px;font-size:11px;line-height:11px;color:#222;transform:scaleX(0.9635);">August</span><span class="t" style="left:508.07px;top:613.59px;font-size:11px;line-height:11px;color:#222;transform:scaleX(0.9080);">Wed 02</span><span class="t" style="left:571.05px;top:613.59px;font-size:11px;line-height:11px;color:#222;transform:scaleX(0.8613);">Thu 03</span><span class="t" style="left:634.27px;top:613.59px;font-size:11px;line-height:11px;color:#222;transform:scaleX(0.8622);">Fri 04</span><span class="t" style="left:693.62px;top:613.59px;font-size:11px;line-height:11px;color:#222;transform:scaleX(0.8409);">Sat 05</span><span class="t" style="left:752.35px;top:613.59px;font-size:11px;line-height:11px;color:#222;transform:scaleX(0.8746);">Aug 06</span><span class="t" style="left:811.45px;top:613.59px;font-size:11px;line-height:11px;color:#222;transform:scaleX(0.9127);">Mon 07</span><span class="t" style="left:874.42px;top:613.59px;font-size:11px;line-height:11px;color:#222;transform:scaleX(0.8495);">Tue 08</span><span class="t" style="left:932.27px;top:613.59px;font-size:11px;line-height:11px;color:#222;transform:scaleX(0.9080);">Wed 09</span><span class="t" style="left:995.25px;top:613.59px;font-size:11px;line-height:11px;color:#222;transform:scaleX(0.8613);">Thu 10</span><span class="t" style="left:1058.47px;top:613.59px;font-size:11px;line-height:11px;color:#222;transform:scaleX(0.8879);">Fri 11</span><span class="t" style="left:1117.83px;top:613.59px;font-size:11px;line-height:11px;color:#222;transform:scaleX(0.8409);">Sat 12</span><span class="t" style="left:1176.55px;top:613.59px;font-size:11px;line-height:11px;color:#222;transform:scaleX(0.8746);">Aug 13</span><span class="t" style="left:1235.65px;top:613.59px;font-size:11px;line-height:11px;color:#222;transform:scaleX(0.9127);">Mon 14</span></div><div class="g"><div style="left:0px;top:630px;width:1280px;height:17.5px;background:#f5f5f5;"></div><div style="left:0px;top:667.1px;width:1266.5px;height:19.6px;background:#efefef;"></div><div style="left:0px;top:706.3px;width:1266.5px;height:19.6px;background:#efefef;"></div><div class="cs" style="left:26px"></div><div class="cs" style="left:48px"></div><div class="cs" style="left:70.5px"></div><div class="cs" style="left:89.5px"></div><div class="cs" style="left:417px"></div><div class="cs" style="left:962.5px"></div><div class="cs" style="left:1028px"></div><div class="cs" style="left:1093px"></div><div class="cs" style="left:1169.5px"></div><div class="cs" style="left:1246px"></div><div style="left:0px;top:647px;width:1266px;height:1px;background:#e6e6e6;"></div><div style="left:1266.5px;top:647.5px;width:13.5px;height:96.5px;background:#fff;"></div><div style="left:1267.2px;top:678px;width:12.8px;height:35.6px;background:#cdcdcd;"></div><span class="t" style="left:2.80px;top:632.09px;font-size:11px;line-height:11px;color:#333;transform:scaleX(0.8565);">Axis</span><span class="t" style="left:95.00px;top:632.09px;font-size:11px;line-height:11px;color:#333;transform:scaleX(0.9031);">Name</span><span class="t" style="left:422.50px;top:632.09px;font-size:11px;line-height:11px;color:#333;transform:scaleX(0.9177);">Description</span><span class="t" style="left:967.90px;top:632.09px;font-size:11px;line-height:11px;color:#333;transform:scaleX(0.9038);">Value</span><span class="t" style="left:1033.50px;top:632.09px;font-size:11px;line-height:11px;color:#333;transform:scaleX(0.8978);">Units</span><span class="t" style="left:1098.60px;top:632.09px;font-size:11px;line-height:11px;color:#333;transform:scaleX(0.9145);">Display Min</span><span class="t" style="left:1174.80px;top:632.09px;font-size:11px;line-height:11px;color:#333;transform:scaleX(0.9047);">Display Max</span><div class="lbox" style="top:649.3px"></div><span class="t" style="left:4.20px;top:654.18px;font-size:9px;line-height:9px;color:#333;">L</span><span class="t" style="left:14.70px;top:653.48px;font-size:9px;line-height:9px;color:#333;">R</span><div style="left:28.7px;top:649.0px;width:17.6px;height:16.9px;background:#41a22b;"></div><div class="cb" style="top:652.0px"></div><div class="chip" style="left:95px;top:648.9px;width:145.5px"></div><div class="chipsep" style="left:225.6px;top:649.9px"></div><span class="t" style="left:114.40px;top:653.19px;font-size:11px;line-height:11px;color:#222;transform:scaleX(0.8762);">TWell 1</span><span class="t" style="left:162.25px;top:653.19px;font-size:11px;line-height:11px;color:#222;transform:scaleX(0.8760);">Age</span><span class="t" style="left:194.75px;top:653.19px;font-size:11px;line-height:11px;color:#222;transform:scaleX(0.8879);">Actual</span><span class="t" style="left:422.00px;top:653.19px;font-size:11px;line-height:11px;color:#222;transform:scaleX(0.8811);">Z.Lurdusaurus</span><span class="t" style="left:967.90px;top:653.19px;font-size:11px;line-height:11px;color:#222;transform:scaleX(0.8871);">-833.05</span><span class="t" style="left:1033.50px;top:653.19px;font-size:11px;line-height:11px;color:#222;transform:scaleX(0.9807);">bbl/d</span><span class="t" style="left:1098.60px;top:653.19px;font-size:11px;line-height:11px;color:#999;transform:scaleX(0.8734);">-1,000.00</span><span class="t" style="left:1174.80px;top:653.19px;font-size:11px;line-height:11px;color:#999;transform:scaleX(0.8546);">2,000.00</span><div class="lbox" style="top:668.9px"></div><span class="t" style="left:4.20px;top:673.78px;font-size:9px;line-height:9px;color:#333;">L</span><span class="t" style="left:14.70px;top:673.08px;font-size:9px;line-height:9px;color:#333;">R</span><div style="left:28.7px;top:668.6px;width:17.6px;height:16.9px;background:#a9c1de;"></div><div class="cb" style="top:671.6px"></div><div class="chip" style="left:95px;top:668.5px;width:138.4px"></div><div class="chipsep" style="left:217.5px;top:669.5px"></div><span class="t" style="left:114.40px;top:672.79px;font-size:11px;line-height:11px;color:#222;transform:scaleX(0.9165);">entity</span><span class="t" style="left:154.40px;top:672.79px;font-size:11px;line-height:11px;color:#222;transform:scaleX(0.8734);">Age</span><span class="t" style="left:186.50px;top:672.79px;font-size:11px;line-height:11px;color:#222;transform:scaleX(0.8912);">Actual</span><span class="t" style="left:422.00px;top:672.79px;font-size:11px;line-height:11px;color:#222;transform:scaleX(0.8968);">Z.Hot_Magenta</span><span class="t" style="left:967.90px;top:672.79px;font-size:11px;line-height:11px;color:#222;transform:scaleX(0.8209);">15.41</span><span class="t" style="left:1033.50px;top:672.79px;font-size:11px;line-height:11px;color:#222;transform:scaleX(0.9296);">ppm</span><span class="t" style="left:1098.60px;top:672.79px;font-size:11px;line-height:11px;color:#999;transform:scaleX(0.8734);">-1,000.00</span><span class="t" style="left:1174.80px;top:672.79px;font-size:11px;line-height:11px;color:#999;transform:scaleX(0.8546);">2,000.00</span><div class="lbox" style="top:688.5px"></div><span class="t" style="left:4.20px;top:693.38px;font-size:9px;line-height:9px;color:#333;">L</span><span class="t" style="left:14.70px;top:692.68px;font-size:9px;line-height:9px;color:#333;">R</span><div style="left:28.7px;top:688.2px;width:17.6px;height:16.9px;background:#c1001f;"></div><div class="cb" style="top:691.2px"></div><div class="chip" style="left:95px;top:688.1px;width:59.7px"></div><div class="chipsep" style="left:138.8px;top:689.1px"></div><span class="t" style="left:112.00px;top:692.39px;font-size:11px;line-height:11px;color:#222;transform:scaleX(0.8504);">Silver</span><span class="t" style="left:422.00px;top:692.39px;font-size:11px;line-height:11px;color:#222;transform:scaleX(0.8327);">Silver1</span><span class="t" style="left:967.90px;top:692.39px;font-size:11px;line-height:11px;color:#222;transform:scaleX(0.8871);">-963.24</span><span class="t" style="left:1033.50px;top:692.39px;font-size:11px;line-height:11px;color:#222;transform:scaleX(0.9191);">bbl</span><span class="t" style="left:1098.60px;top:692.39px;font-size:11px;line-height:11px;color:#999;transform:scaleX(0.8734);">-1,000.00</span><span class="t" style="left:1174.80px;top:692.39px;font-size:11px;line-height:11px;color:#999;transform:scaleX(0.8546);">2,000.00</span><div class="lbox" style="top:708.1px"></div><span class="t" style="left:4.20px;top:712.98px;font-size:9px;line-height:9px;color:#333;">L</span><span class="t" style="left:14.70px;top:712.28px;font-size:9px;line-height:9px;color:#333;">R</span><div style="left:28.7px;top:707.8px;width:17.6px;height:16.9px;background:#d4a460;"></div><div class="cb" style="top:710.8px"></div><div class="chip" style="left:95px;top:707.7px;width:79.4px"></div><div class="chipsep" style="left:159.4px;top:708.7px"></div><span class="t" style="left:113.80px;top:711.99px;font-size:11px;line-height:11px;color:#222;transform:scaleX(0.8652);">{Silver} *2</span><span class="t" style="left:967.90px;top:711.99px;font-size:11px;line-height:11px;color:#222;transform:scaleX(0.8734);">-1,926.47</span><svg width="1280" height="114" viewBox="0 630 1280 114" style="left:0;top:630px"><path d="M50,664.5L57.2,656.1L61.6,660.1L70.2,651.1" fill="none" stroke="#111" stroke-width="1.7"/><path d="M76.8,658.1L79.8,661.5L85.2,653.7" fill="none" stroke="#111" stroke-width="1.7"/><path d="M229.8,655.1L234.2,659.5M234.2,655.1L229.8,659.5" stroke="#555" stroke-width="1"/><path d="M402.4,652.5H412.79999999999995M405.79999999999995,652.3000000000001V650.7H409.4,V652.3000000000001" fill="none" stroke="#666" stroke-width="1.1"/><path d="M403.59999999999997,652.7L404.2,662.1H411.0L411.59999999999997,652.7" fill="none" stroke="#666" stroke-width="1.1"/><path d="M406.0,654.7V660.1M407.59999999999997,654.7V660.1M409.2,654.7V660.1" stroke="#666" stroke-width="0.8"/><path d="M50,684.1L57.2,675.7L61.6,679.7L70.2,670.7" fill="none" stroke="#111" stroke-width="1.7"/><path d="M76.8,677.7L79.8,681.1L85.2,673.3000000000001" fill="none" stroke="#111" stroke-width="1.7"/><path d="M222.20000000000002,674.7L226.6,679.1M226.6,674.7L222.20000000000002,679.1" stroke="#555" stroke-width="1"/><path d="M402.4,672.1H412.79999999999995M405.79999999999995,671.9000000000001V670.3000000000001H409.4,V671.9000000000001" fill="none" stroke="#666" stroke-width="1.1"/><path d="M403.59999999999997,672.3000000000001L404.2,681.7H411.0L411.59999999999997,672.3000000000001" fill="none" stroke="#666" stroke-width="1.1"/><path d="M406.0,674.3000000000001V679.7M407.59999999999997,674.3000000000001V679.7M409.2,674.3000000000001V679.7" stroke="#666" stroke-width="0.8"/><path d="M50,703.7L57.2,695.3000000000001L61.6,699.3000000000001L70.2,690.3000000000001" fill="none" stroke="#111" stroke-width="1.7"/><path d="M76.8,697.3000000000001L79.8,700.7L85.2,692.9000000000001" fill="none" stroke="#111" stroke-width="1.7"/><path d="M143.70000000000002,694.3000000000001L148.1,698.7M148.1,694.3000000000001L143.70000000000002,698.7" stroke="#555" stroke-width="1"/><path d="M402.4,691.7H412.79999999999995M405.79999999999995,691.5000000000001V689.9000000000001H409.4,V691.5000000000001" fill="none" stroke="#666" stroke-width="1.1"/><path d="M403.59999999999997,691.9000000000001L404.2,701.3000000000001H411.0L411.59999999999997,691.9000000000001" fill="none" stroke="#666" stroke-width="1.1"/><path d="M406.0,693.9000000000001V699.3000000000001M407.59999999999997,693.9000000000001V699.3000000000001M409.2,693.9000000000001V699.3000000000001" stroke="#666" stroke-width="0.8"/><path d="M50,723.3L57.2,714.9L61.6,718.9L70.2,709.9" fill="none" stroke="#111" stroke-width="1.7"/><path d="M76.8,716.9L79.8,720.3L85.2,712.5" fill="none" stroke="#111" stroke-width="1.7"/><path d="M163.8,713.9L168.2,718.3M168.2,713.9L163.8,718.3" stroke="#555" stroke-width="1"/><path d="M402.4,711.3H412.79999999999995M405.79999999999995,711.1V709.5H409.4,V711.1" fill="none" stroke="#666" stroke-width="1.1"/><path d="M403.59999999999997,711.5L404.2,720.9H411.0L411.59999999999997,711.5" fill="none" stroke="#666" stroke-width="1.1"/><path d="M406.0,713.5V718.9M407.59999999999997,713.5V718.9M409.2,713.5V718.9" stroke="#666" stroke-width="0.8"/><rect x="380.6" y="651.3" width="10.4" height="10.6" rx="1" fill="#777"/><rect x="381.90000000000003" y="652.5999999999999" width="7.8" height="2.2" fill="#eee"/><rect x="381.9" y="655.9" width="2" height="1.2" fill="#eee"/><rect x="384.7" y="655.9" width="2" height="1.2" fill="#eee"/><rect x="387.5" y="655.9" width="2" height="1.2" fill="#eee"/><rect x="381.9" y="657.9" width="2" height="1.2" fill="#eee"/><rect x="384.7" y="657.9" width="2" height="1.2" fill="#eee"/><rect x="387.5" y="657.9" width="2" height="1.2" fill="#eee"/><rect x="381.9" y="659.9" width="2" height="1.2" fill="#eee"/><rect x="384.7" y="659.9" width="2" height="1.2" fill="#eee"/><rect x="387.5" y="659.9" width="2" height="1.2" fill="#eee"/><rect x="380.6" y="670.9" width="10.4" height="10.6" rx="1" fill="#777"/><rect x="381.90000000000003" y="672.1999999999999" width="7.8" height="2.2" fill="#eee"/><rect x="381.9" y="675.5" width="2" height="1.2" fill="#eee"/><rect x="384.7" y="675.5" width="2" height="1.2" fill="#eee"/><rect x="387.5" y="675.5" width="2" height="1.2" fill="#eee"/><rect x="381.9" y="677.5" width="2" height="1.2" fill="#eee"/><rect x="384.7" y="677.5" width="2" height="1.2" fill="#eee"/><rect x="387.5" y="677.5" width="2" height="1.2" fill="#eee"/><rect x="381.9" y="679.5" width="2" height="1.2" fill="#eee"/><rect x="384.7" y="679.5" width="2" height="1.2" fill="#eee"/><rect x="387.5" y="679.5" width="2" height="1.2" fill="#eee"/><rect x="380.6" y="690.5" width="10.4" height="10.6" rx="1" fill="#777"/><rect x="381.90000000000003" y="691.8" width="7.8" height="2.2" fill="#eee"/><rect x="381.9" y="695.1" width="2" height="1.2" fill="#eee"/><rect x="384.7" y="695.1" width="2" height="1.2" fill="#eee"/><rect x="387.5" y="695.1" width="2" height="1.2" fill="#eee"/><rect x="381.9" y="697.1" width="2" height="1.2" fill="#eee"/><rect x="384.7" y="697.1" width="2" height="1.2" fill="#eee"/><rect x="387.5" y="697.1" width="2" height="1.2" fill="#eee"/><rect x="381.9" y="699.1" width="2" height="1.2" fill="#eee"/><rect x="384.7" y="699.1" width="2" height="1.2" fill="#eee"/><rect x="387.5" y="699.1" width="2" height="1.2" fill="#eee"/><rect x="380.6" y="710.0999999999999" width="10.4" height="10.6" rx="1" fill="#777"/><rect x="381.90000000000003" y="711.3999999999999" width="7.8" height="2.2" fill="#eee"/><rect x="381.9" y="714.7" width="2" height="1.2" fill="#eee"/><rect x="384.7" y="714.7" width="2" height="1.2" fill="#eee"/><rect x="387.5" y="714.7" width="2" height="1.2" fill="#eee"/><rect x="381.9" y="716.7" width="2" height="1.2" fill="#eee"/><rect x="384.7" y="716.7" width="2" height="1.2" fill="#eee"/><rect x="387.5" y="716.7" width="2" height="1.2" fill="#eee"/><rect x="381.9" y="718.7" width="2" height="1.2" fill="#eee"/><rect x="384.7" y="718.7" width="2" height="1.2" fill="#eee"/><rect x="387.5" y="718.7" width="2" height="1.2" fill="#eee"/><rect x="380.6" y="729.6999999999999" width="10.4" height="10.6" rx="1" fill="#777"/><rect x="381.90000000000003" y="730.9999999999999" width="7.8" height="2.2" fill="#eee"/><rect x="381.9" y="734.3" width="2" height="1.2" fill="#eee"/><rect x="384.7" y="734.3" width="2" height="1.2" fill="#eee"/><rect x="387.5" y="734.3" width="2" height="1.2" fill="#eee"/><rect x="381.9" y="736.3" width="2" height="1.2" fill="#eee"/><rect x="384.7" y="736.3" width="2" height="1.2" fill="#eee"/><rect x="387.5" y="736.3" width="2" height="1.2" fill="#eee"/><rect x="381.9" y="738.3" width="2" height="1.2" fill="#eee"/><rect x="384.7" y="738.3" width="2" height="1.2" fill="#eee"/><rect x="387.5" y="738.3" width="2" height="1.2" fill="#eee"/><path d="M150,657.1H158.75M156.15,655.0L158.75,657.1L156.15,659.2" fill="none" stroke="#222" stroke-width="1.05"/><path d="M182.9,657.1H191.5M188.9,655.0L191.5,657.1L188.9,659.2" fill="none" stroke="#222" stroke-width="1.05"/><path d="M142.5,676.7H151.25M148.65,674.6L151.25,676.7L148.65,678.8000000000001" fill="none" stroke="#222" stroke-width="1.05"/><path d="M175,676.7H183.5M180.9,674.6L183.5,676.7L180.9,678.8000000000001" fill="none" stroke="#222" stroke-width="1.05"/><polygon points="111.00,656.60 108.35,661.19 103.05,661.19 100.40,656.60 103.05,652.01 108.35,652.01" fill="#fff" stroke="#444" stroke-width="1"/><circle cx="105.7" cy="656.6" r="3.2" fill="#0a0a0a"/><polygon points="111.00,676.20 108.35,680.79 103.05,680.79 100.40,676.20 103.05,671.61 108.35,671.61" fill="#fff" stroke="#444" stroke-width="1"/><circle cx="105.7" cy="676.2" r="3.2" fill="#0a0a0a"/><path d="M100.4,691.9000000000001H104.4L110.2,697.3000000000001L106.8,700.9000000000001L100.4,695.5Z" fill="#111"/><circle cx="102.3" cy="693.7" r="0.8" fill="#fff"/><rect x="100.6" y="710.9" width="9.6" height="10" rx="0.8" fill="#333"/><rect x="101.8" y="712.0999999999999" width="7.2" height="2" fill="#fff"/><rect x="101.8" y="715.1" width="1.8" height="1.1" fill="#fff"/><rect x="104.4" y="715.1" width="1.8" height="1.1" fill="#fff"/><rect x="107.0" y="715.1" width="1.8" height="1.1" fill="#fff"/><rect x="101.8" y="717.0" width="1.8" height="1.1" fill="#fff"/><rect x="104.4" y="717.0" width="1.8" height="1.1" fill="#fff"/><rect x="107.0" y="717.0" width="1.8" height="1.1" fill="#fff"/><rect x="101.8" y="718.9" width="1.8" height="1.1" fill="#fff"/><rect x="104.4" y="718.9" width="1.8" height="1.1" fill="#fff"/><rect x="107.0" y="718.9" width="1.8" height="1.1" fill="#fff"/><rect x="73.2" y="709.5999999999999" width="14.4" height="14.4" fill="none" stroke="#2a7fd4" stroke-width="1" stroke-dasharray="1 1"/><path d="M1269,669.9L1273.9,664.6L1278.8,669.9" fill="none" stroke="#555" stroke-width="2.1"/><path d="M1269,723.4L1273.9,728.7L1278.8,723.4" fill="none" stroke="#555" stroke-width="2.1"/></svg></div></body></html>
